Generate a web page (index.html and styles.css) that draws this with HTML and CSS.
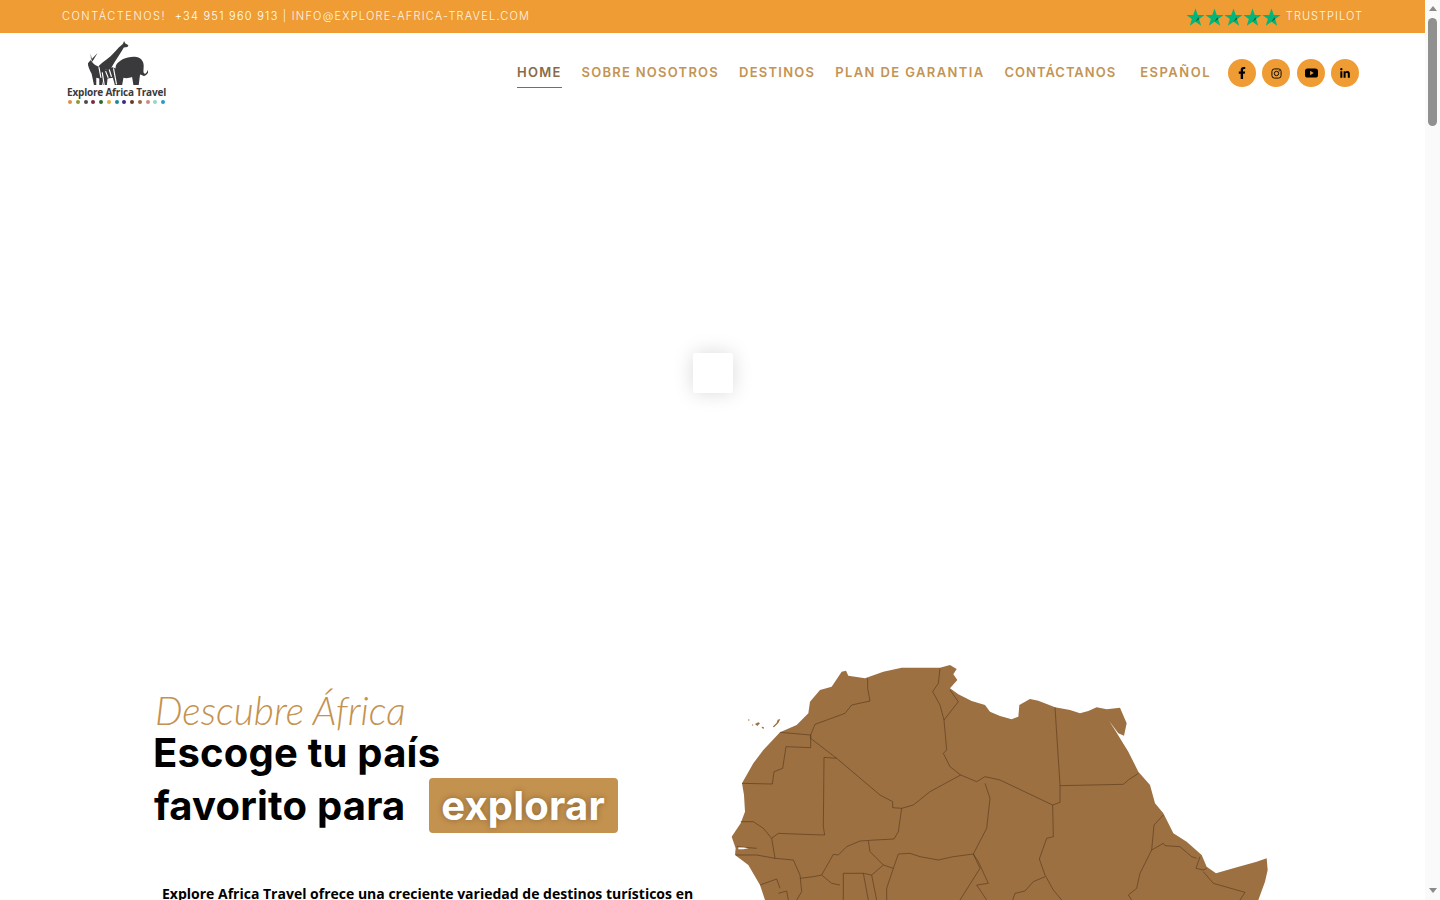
FILE: index.html
```html
<!DOCTYPE html>
<html lang="es">
<head>
    <meta charset="UTF-8" />
    <meta name="viewport" content="width=device-width, initial-scale=1.0"/>
    <title>Explore Africa Travel</title>
    <link rel="stylesheet" href="styles.css">
</head>
<body>

<svg class="defs" width="0" height="0">
    <symbol id="star" viewBox="0 0 20 20">
        <polygon points="10,0.5 12.4,7.4 19.6,7.4 13.8,11.7 16,18.8 10,14.4 4,18.8 6.2,11.7 0.4,7.4 7.6,7.4" fill="#00b67a"/>
        <polygon points="10,14.4 13.8,11.7 13,10" fill="#005128"/>
    </symbol>
</svg>

<div class="window">
    <div class="page">
        <!-- barra superior -->
        <div class="topbar">
            <div class="contact"><span class="hello">CONTÁCTENOS!</span> &nbsp;<span class="phone">+34 951 960 913</span> | INFO@EXPLORE-AFRICA-TRAVEL.COM</div>
            <div class="trust">
                <span class="stars">
                    <svg><use href="#star"/></svg>
                    <svg><use href="#star"/></svg>
                    <svg><use href="#star"/></svg>
                    <svg><use href="#star"/></svg>
                    <svg><use href="#star"/></svg>
                </span>
                <span>TRUSTPILOT</span>
            </div>
        </div>

        <!-- cabecera -->
        <header class="navbar">
            <a class="logo">
                <svg class="logo-animals" viewBox="90 15 190 140">
                    <!-- jirafa -->
                    <path d="M132,92 C145,78 165,68 178,52 C188,40 196,32 204,26 L208,17 L211,24 L221,30 L218,35 L207,37 C200,50 190,64 180,80 L168,100 L135,108 Z" fill="#3a3a3c"/>
                    <!-- elefante -->
                    <path d="M183,92 C190,76 215,64 240,65 C256,66 267,76 267,92 C267,104 264,114 270,116 C276,116 278,106 282,100 L282,108 C278,120 268,126 261,120 L256,118 L252,150 L236,150 L232,126 C222,130 212,130 206,128 L202,150 L186,150 C188,132 180,108 183,92 Z" fill="#3a3a3c"/>
                    <!-- orix -->
                    <path d="M104,78 L128,53 L112,80 L107,55 L108,74 C112,84 118,90 130,94 C142,98 152,104 152,114 L146,128 L141,150 L133,150 L133,130 L124,128 L124,150 L117,150 L110,116 C104,104 98,92 99,84 Z" fill="#3a3a3c"/>
                    <!-- cebra -->
                    <path d="M140,108 L172,96 L184,100 L190,150 L180,150 L174,128 L158,130 L156,150 L144,150 Z" fill="#3a3a3c"/>
                    <path d="M142,112 L148,150 M152,108 L160,128 M163,103 L170,125 M176,100 L185,148 M132,96 L138,128" stroke="#fff" stroke-width="3.5" fill="none"/>
                </svg>
                <span class="logo-name">Explore Africa Travel</span>
                <span class="logo-dots">
                    <i class="d1"></i><i class="d2"></i><i class="d3"></i><i class="d4"></i><i class="d5"></i><i class="d6"></i><i class="d7"></i><i class="d8"></i><i class="d9"></i><i class="d10"></i><i class="d11"></i><i class="d12"></i><i class="d13"></i>
                </span>
            </a>
            <div class="nav-right">
                <nav class="menu">
                    <a class="active">HOME</a>
                    <a>SOBRE NOSOTROS</a>
                    <a>DESTINOS</a>
                    <a class="plan">PLAN DE GARANTIA</a>
                    <a class="contacto">CONTÁCTANOS</a>
                    <a class="lang">ESPAÑOL</a>
                </nav>
                <div class="social">
                    <a class="fb"><svg viewBox="0 0 320 512"><path d="M279.14 288l14.22-92.66h-88.91v-60.13c0-25.35 12.42-50.06 52.24-50.06h40.42V6.26S260.43 0 225.36 0c-73.22 0-121.08 44.38-121.08 124.72v70.62H22.89V288h81.39v224h100.17V288z"/></svg></a>
                    <a class="ig"><svg viewBox="0 0 24 24"><rect x="2" y="2" width="20" height="20" rx="5.5" fill="none" stroke="#000" stroke-width="2"/><circle cx="12" cy="12" r="4.8" fill="none" stroke="#000" stroke-width="2"/><circle cx="17.8" cy="6.2" r="1.3"/></svg></a>
                    <a class="yt"><svg viewBox="0 0 24 18"><rect x="0" y="0.5" width="24" height="17" rx="5"/><polygon points="9.5,5 16,9 9.5,13" fill="#ee9c33"/></svg></a>
                    <a class="in"><svg viewBox="0 0 448 512"><path d="M100.28 448H7.4V148.9h92.88zM53.79 108.1C24.09 108.1 0 83.5 0 53.8a53.79 53.79 0 0 1 107.58 0c0 29.7-24.1 54.3-53.79 54.3zM447.9 448h-92.68V302.4c0-34.7-.7-79.2-48.29-79.2-48.29 0-55.69 37.7-55.69 76.7V448h-92.78V148.9h89.08v40.8h1.3c12.4-23.5 42.69-48.3 87.88-48.3 94 0 111.28 61.9 111.28 142.3V448z"/></svg></a>
                </div>
            </div>
        </header>

        <!-- slider (cargando) -->
        <section class="hero">
            <div class="loader"></div>
        </section>

        <!-- intro con mapa -->
        <section class="intro">
            <div class="intro-text">
                <div class="script">Descubre África</div>
                <h1>Escoge tu país</h1>
                <h1 class="second">favorito para <span class="tag">explorar</span></h1>
                <p>Explore Africa Travel ofrece una creciente variedad de destinos turísticos en</p>
            </div>
            <!-- coordenadas del mapa a 3x -->
            <svg class="map" viewBox="0 0 1680 735">
                <path class="land" d="M35,545 L62,505 L75,470 L72,420 L66,385 L100,325 L130,285 L180,232 L230,210 L265,175 L270,140 L300,105 L335,95 L365,50 L378,47 L385,62 L435,70 L490,50 L545,38 L660,38 L690,30 L710,42 L700,58 L712,75 L690,100 L715,118 L755,138 L795,150 L810,170 L840,183 L875,193 L895,185 L898,150 L930,132 L955,137 L1005,157 L1050,165 L1080,175 L1105,168 L1130,157 L1160,163 L1200,158 L1220,205 L1212,242 L1195,235 L1167,197 L1185,225 L1200,250 L1225,290 L1255,350 L1290,390 L1305,445 L1330,475 L1360,535 L1400,560 L1445,600 L1460,635 L1488,655 L1540,640 L1610,620 L1640,610 L1643,645 L1635,680 L1615,735 L135,735 L120,690 L85,630 L45,600 L47,580 Z"/>
                <path class="gambia" d="M55,577 L72,576 L85,580 L70,583 L55,583 Z"/>
                <path class="land" d="M85,193 l3,0 l0,4 l-3,0 Z M97,208 l3,1 l-1,3 l-3,-1 Z M105,207 l10,-5 l5,3 l-8,8 Z M125,215 l6,1 l1,5 l-6,-1 Z M158,215 l12,-12 l3,-9 l8,-2 l-6,12 l-13,13 Z"/>
                <g class="borders">
                    <path d="M180,232 L272,240 L272,278 L198,275 L188,340 L162,350 L157,387 L66,385"/>
                    <path d="M272,250 L272,240 L285,208 L375,175 L395,150 L450,138 L443,100 L443,70"/>
                    <path d="M272,250 L350,310 L480,420 L518,440 L518,458 L545,460 L580,450 L630,410 L722,360 L770,380 L795,365 L840,375 L998,450 L1020,442 L1020,390 L1005,157"/>
                    <path d="M350,310 L312,307 L310,515 L314,540 L250,538 L175,535 L155,550 L130,520 L100,500 L62,500"/>
                    <path d="M155,550 L165,610 L110,600 L48,600"/>
                    <path d="M50,575 L110,580"/>
                    <path d="M165,610 L220,615 L240,660 L245,710 L230,735"/>
                    <path d="M240,670 L280,665 L305,660 L340,598 L355,600 L380,575 L420,558 L465,555 L522,552 L535,530 L545,460"/>
                    <path d="M305,660 L335,685 L360,690"/>
                    <path d="M445,558 L450,590 L490,630 L520,640 L500,700 L500,735"/>
                    <path d="M370,735 L370,655 L430,655 L455,660 L490,630"/>
                    <path d="M430,655 L445,735 M455,660 L470,735"/>
                    <path d="M520,640 L535,597 L570,595 L600,605 L655,615 L700,605 L760,597 L780,640 L720,735"/>
                    <path d="M120,690 L170,672 L180,700 M175,715 L200,708 L205,735"/>
                    <path d="M795,385 L810,430 L800,520 L760,597 L775,620 L805,685 L770,690 L800,735"/>
                    <path d="M672,195 L680,285 L670,295 L690,335 L722,360"/>
                    <path d="M660,40 L655,85 L638,110 L660,150 L672,195 L715,140 L690,105"/>
                    <path d="M998,450 L1000,545 L980,550 L958,612 L975,660 L1000,705 L1025,735"/>
                    <path d="M975,665 L940,680 L915,708 L885,715 L878,735"/>
                    <path d="M1020,392 L1210,388 L1225,375 L1255,355"/>
                    <path d="M1330,480 L1302,510 L1295,585 L1260,655 L1250,700 L1225,720 L1235,735"/>
                    <path d="M1295,585 L1330,565 L1335,572 L1380,575 L1415,605 L1430,610"/>
                    <path d="M1440,605 L1428,640 L1450,645 L1460,640"/>
                    <path d="M1450,650 L1480,685 L1575,712 L1560,735"/>
                </g>
            </svg>
        </section>
    </div>

    <!-- barra de desplazamiento -->
    <div class="scrollbar">
        <span class="arrow-up"></span>
        <span class="thumb"></span>
        <span class="arrow-down"></span>
    </div>
</div>

</body>
</html>
```

FILE: styles.css
```css
* {
    box-sizing:border-box;
}

body {
    margin:0;
    font-family:"Inter", "Liberation Sans", sans-serif;
    background:#fff;
    overflow:hidden;
}

.defs {
    display:block;
}

.window {
    display:flex;
    height:100vh;
}

.page {
    flex:1;
    min-width:0;
    height:100vh;
    overflow:hidden;
}

/* barra superior */
.topbar {
    height:33px;
    background:#ee9c33;
    color:#fff6e8;
    display:flex;
    align-items:center;
    justify-content:space-between;
    padding:0 62px 1px;
    font-size:11px;
    font-weight:300;
    letter-spacing:1.2px;
}

.hello {
    letter-spacing:1.5px;
}

.phone {
    color:#fff;
    letter-spacing:1.25px;
}

.trust {
    display:flex;
    align-items:center;
    gap:5px;
    letter-spacing:1.05px;
}

.stars {
    display:flex;
    height:19px;
    margin-top:3px;
}

.stars svg {
    width:19px;
    height:19px;
    display:block;
}

/* cabecera */
.navbar {
    height:80px;
    display:flex;
    justify-content:space-between;
    align-items:flex-start;
    padding:0 66px 0 67px;
}

.logo {
    width:99px;
    display:flex;
    flex-direction:column;
    align-items:center;
    padding-top:7px;
}

.logo-animals {
    width:63px;
    height:47px;
    display:block;
}

.logo-name {
    font-family:"Open Sans", sans-serif;
    font-weight:700;
    font-size:10px;
    line-height:12px;
    margin-top:-1px;
    color:#3a3a3c;
    white-space:nowrap;
    letter-spacing:-0.2px;
}

.logo-dots {
    display:flex;
    width:97px;
    justify-content:space-between;
    margin-top:2px;
}

.logo-dots i {
    width:4px;
    height:4px;
    border-radius:50%;
    display:block;
}

.d1 { background:#d9923f; }
.d2 { background:#8a9a3a; }
.d3 { background:#4a4a50; }
.d4 { background:#7a2a40; }
.d5 { background:#2e6a30; }
.d6 { background:#e0b040; }
.d7 { background:#1a8a9a; }
.d8 { background:#3a2a80; }
.d9 { background:#6a3a20; }
.d10 { background:#a06a40; }
.d11 { background:#d08a80; }
.d12 { background:#90d8c8; }
.d13 { background:#20a0c0; }

.nav-right {
    display:flex;
    align-items:flex-start;
}

.menu {
    display:flex;
    gap:20px;
    margin-top:26px;
}

.menu a {
    color:#c49454;
    font-size:13px;
    font-weight:600;
    letter-spacing:1.25px;
    line-height:26px;
    height:29px;
    cursor:pointer;
    white-space:nowrap;
}

.menu a.active {
    color:#8a6a45;
    border-bottom:1px solid #8a6a45;
}

.menu a.plan {
    letter-spacing:1.38px;
}

.menu a.contacto {
    letter-spacing:1px;
}

.menu a.lang {
    margin-left:4px;
    letter-spacing:1.5px;
}

.social {
    display:flex;
    gap:6px;
    margin:26px 0 0 17px;
}

.social a {
    width:28px;
    height:28px;
    border-radius:50%;
    background:#ee9c33;
    display:flex;
    align-items:center;
    justify-content:center;
}

.social svg {
    display:block;
}

.social a.yt {
    margin-left:1px;
}

.fb svg { width:8px; height:12px; }
.ig svg { width:11px; height:11px; }
.yt svg { width:13px; height:10px; }
.in svg { width:10px; height:11px; }

/* slider */
.hero {
    height:520px;
    display:flex;
    align-items:center;
    justify-content:center;
}

.loader {
    width:40px;
    height:40px;
    background:#fff;
    border-radius:2px;
    box-shadow:0 0 20px rgba(0,0,0,0.15);
}

/* intro */
.intro {
    display:flex;
    align-items:flex-start;
    padding-left:153px;
}

.intro-text {
    width:567px;
    flex:none;
    padding-top:55px;
}

.script {
    font-family:"Lato", sans-serif;
    font-style:italic;
    font-weight:300;
    font-size:39px;
    line-height:44px;
    color:#c4924f;
    padding-left:2px;
}

.intro-text h1 {
    margin:0;
    color:#000;
    font-size:40px;
    font-weight:700;
    line-height:42px;
    letter-spacing:0.2px;
    white-space:nowrap;
}

.intro-text h1.second {
    margin-top:4px;
    padding-left:1px;
    line-height:55px;
    display:flex;
    align-items:center;
    gap:23px;
}

.tag {
    display:inline-block;
    background:#c4924f;
    color:#fff;
    border-radius:4px;
    height:55px;
    width:189px;
    text-align:center;
    text-shadow:0 0 6px rgba(0,0,0,0.3);
}

.intro-text p {
    margin:49px 0 0 9px;
    width:540px;
    font-family:"Open Sans", sans-serif;
    font-size:14px;
    font-weight:700;
    line-height:24px;
    color:#000;
}

.map {
    width:560px;
    height:245px;
    flex:none;
    margin-top:22px;
    display:block;
}

.land {
    fill:#9c7040;
}

.gambia {
    fill:#fff;
}

.borders path {
    fill:none;
    stroke:#4a3016;
    stroke-width:1.6;
}

/* barra de desplazamiento */
.scrollbar {
    width:15px;
    flex:none;
    background:#fafafa;
    display:flex;
    flex-direction:column;
    align-items:center;
    padding:6px 0 7px;
}

.arrow-up {
    width:0;
    height:0;
    border-left:4px solid transparent;
    border-right:4px solid transparent;
    border-bottom:5px solid #8a8a8a;
}

.thumb {
    width:9px;
    height:108px;
    margin-top:7px;
    border-radius:5px;
    background:#909090;
}

.arrow-down {
    width:0;
    height:0;
    margin-top:auto;
    border-left:4px solid transparent;
    border-right:4px solid transparent;
    border-top:5px solid #8a8a8a;
}
```
